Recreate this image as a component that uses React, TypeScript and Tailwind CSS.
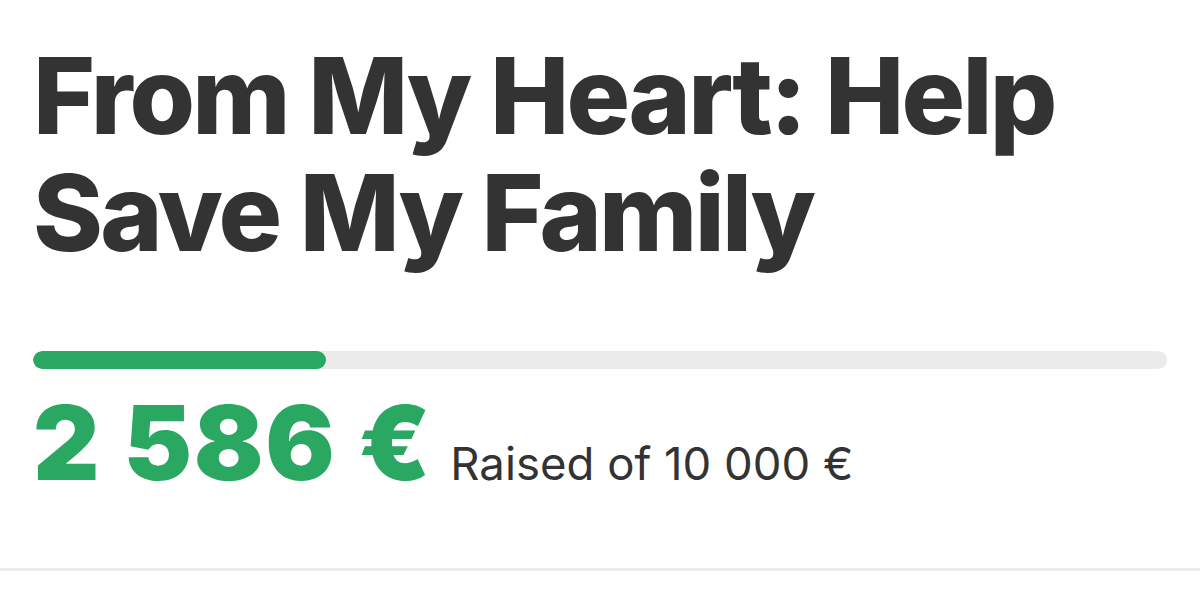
export default function App() {
  const raised = 2586
  const goal = 10000
  const pct = (raised / goal) * 100

  return (
    <div className="w-[1200px] h-[592px] bg-white overflow-hidden font-['Inter','Liberation_Sans',sans-serif]">
      <div className="px-[33px] pt-[37px]">
        <h1 className="text-[106px] leading-[117px] font-extrabold text-[#333333] tracking-[-0.026em]">
          From My Heart: Help
          <br />
          Save My Family
        </h1>

        <div className="mt-[80px] h-[18px] w-full rounded-full bg-[#ebebeb] overflow-hidden">
          <div className="h-full rounded-full bg-[#2aa862]" style={{ width: `${pct}%` }} />
        </div>

        <div className="mt-[22px] flex flex-row items-baseline gap-[18px]">
          <p className="text-[103px] leading-none font-black text-[#2aa862] tracking-[0.016em]">2 586 €</p>
          <p className="text-[45.5px] leading-none text-[#333333]">Raised of 10 000 €</p>
        </div>
      </div>

      <div className="mt-[74px] h-[3px] w-full bg-[#ebebeb]" />
    </div>
  )
}
